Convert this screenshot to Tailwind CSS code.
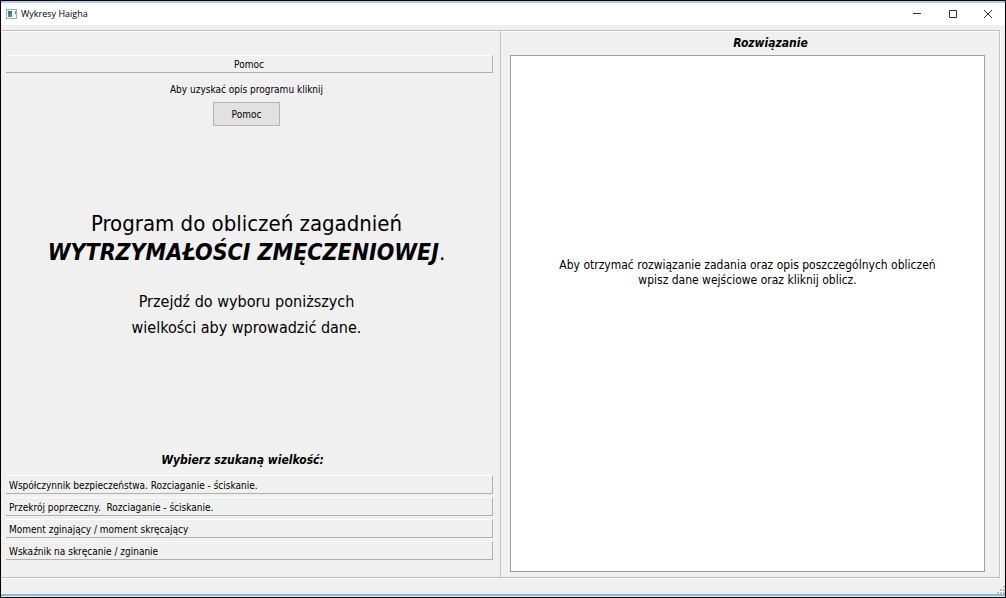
<!DOCTYPE html>
<html lang="pl">
<head>
<meta charset="utf-8">
<meta name="viewport" content="width=device-width, initial-scale=1">
<title>Wykresy Haigha</title>
<script src="https://cdn.jsdelivr.net/npm/@tailwindcss/browser@4"></script>
</head>
<body class="flex min-h-screen flex-col border border-black bg-[#f0f0f0] pb-px font-['Tahoma','DejaVu_Sans_Condensed',sans-serif] text-[10px] leading-4 text-black">
  <header class="flex h-6 shrink-0 items-center border-t-2 border-[#a9ceef] bg-white pl-[5px]">
    <svg class="mr-1 h-[10px] w-[11px]" viewBox="0 0 11 10" aria-hidden="true">
      <rect x="0.5" y="0.5" width="10" height="9" fill="#f4f6f7" stroke="#a3abb2"/>
      <defs><linearGradient id="pane" x1="0" y1="0" x2="0" y2="1"><stop offset="0" stop-color="#3c6c9c"/><stop offset="1" stop-color="#4fa276"/></linearGradient></defs>
      <rect x="2" y="2" width="4" height="6" fill="url(#pane)"/>
      <rect x="9" y="2" width="1" height="3" fill="#5d9c86"/>
    </svg>
    <h1 class="grow font-['Segoe_UI','Open_Sans',sans-serif] text-[9px]">Wykresy Haigha</h1>
    <div class="flex self-stretch">
      <button type="button" aria-label="Minimalizuj" class="flex w-9 items-center justify-center"><svg class="size-2" viewBox="0 0 8 8"><path d="M0 3.5h8" stroke="#333"/></svg></button>
      <button type="button" aria-label="Maksymalizuj" class="flex w-[35px] items-center justify-center"><svg class="size-2" viewBox="0 0 8 8"><path d="M.5.5h7v7h-7z" fill="none" stroke="#333"/></svg></button>
      <button type="button" aria-label="Zamknij" class="flex w-[35px] items-center justify-center"><svg class="size-2" viewBox="0 0 8 8"><path d="M0 0l8 8M8 0L0 8" stroke="#333"/></svg></button>
    </div>
  </header>

  <main class="mt-[5px] mr-[5px] grid grow grid-cols-[500fr_498fr] border-y border-r border-[#c0c0c0] shadow-[1px_1px_0_#fff,inset_0_1px_0_#fff]">
    <section class="flex flex-col border-r border-[#c0c0c0] pt-6 pr-[7px] pb-[17px] pl-[5px]">
      <button type="button" class="h-[18px] border-t border-r border-b border-t-white border-r-[#b0b0b0] border-b-[#b0b0b0] pt-px">Pomoc</button>
      <div class="mr-1.5 flex grow flex-col items-center pt-[9px] text-center">
        <p>Aby uzyskać opis programu kliknij</p>
        <button type="button" class="mt-1 h-6 w-[67px] border border-[#b4b4b4] bg-[#e1e1e1] pt-px">Pomoc</button>
        <div class="flex grow flex-col justify-center pb-7">
          <p class="text-[22px] leading-7">Program do obliczeń zagadnień<br><strong class="text-[23px]"><em>WYTRZYMAŁOŚCI ZMĘCZENIOWEJ</em></strong>.</p>
          <p class="mt-[22px] text-[16px] leading-[26px]">Przejdź do wyboru poniższych<br>wielkości aby wprowadzić dane.</p>
        </div>
        <h2 class="mr-2 text-[12px] font-bold italic">Wybierz szukaną wielkość:</h2>
      </div>
      <div class="mt-[7px] flex flex-col gap-[3px]">
        <button type="button" class="h-[19px] border-t border-r border-b border-t-white border-r-[#b0b0b0] border-b-[#b0b0b0] pt-0.5 pl-[3px] text-left">Współczynnik bezpieczeństwa. Rozciaganie - ściskanie.</button>
        <button type="button" class="h-[19px] border-t border-r border-b border-t-white border-r-[#b0b0b0] border-b-[#b0b0b0] pt-0.5 pl-[3px] text-left">Przekrój poprzeczny.&nbsp; Rozciaganie - ściskanie.</button>
        <button type="button" class="h-[19px] border-t border-r border-b border-t-white border-r-[#b0b0b0] border-b-[#b0b0b0] pt-0.5 pl-[3px] text-left">Moment zginający / moment skręcający</button>
        <button type="button" class="h-[19px] border-t border-r border-b border-t-white border-r-[#b0b0b0] border-b-[#b0b0b0] pt-0.5 pl-[3px] text-left">Wskaźnik na skręcanie / zginanie</button>
      </div>
    </section>
    <section class="flex flex-col pt-1 pb-[5px] pl-[9px]">
      <label for="solution" class="ml-8 text-center text-[12px] font-bold italic">Rozwiązanie</label>
      <textarea id="solution" readonly class="mt-1 mr-[14px] grow resize-none border border-[#a0a0a0] bg-white pt-[202px] text-center text-[12px] leading-[15px] outline-none">Aby otrzymać rozwiązanie zadania oraz opis poszczególnych obliczeń
wpisz dane wejściowe oraz kliknij oblicz.</textarea>
    </section>
  </main>

  <footer class="flex h-[18px] shrink-0 items-end justify-end border-b-2 border-[#86b8e0]">
    <svg class="size-2" viewBox="0 0 8 8" aria-hidden="true"><path d="M6 0h2v2H6zM3 3h2v2H3zM6 3h2v2H6zM0 6h2v2H0zM3 6h2v2H3zM6 6h2v2H6z" fill="#bcbcbc"/></svg>
  </footer>
</body>
</html>
